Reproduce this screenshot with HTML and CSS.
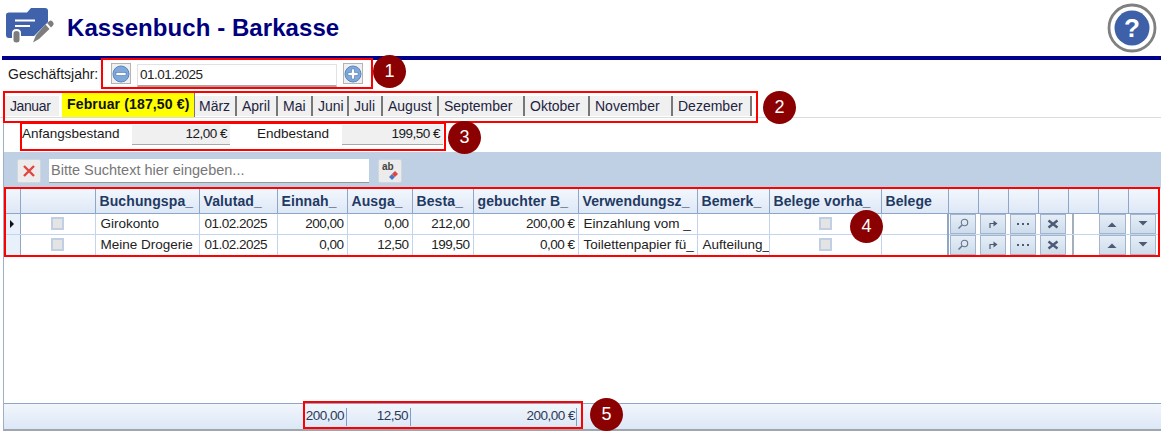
FILE: index.html
```html
<!DOCTYPE html>
<html lang="de">
<head>
<meta charset="utf-8">
<title>Kassenbuch - Barkasse</title>
<link rel="stylesheet" href="styles.css">
</head>
<body>
<div class="page">
  <header class="top">
    <svg class="logo" viewBox="0 0 54 44" width="54" height="44">
      <path fill="#3f62ab" d="M6 15Q6 12.500 9 12.500H27L31 8H45Q48 8 48 11V22L34 36H21V33Q21 29 16.500 29T12 33V38H9Q6 38 6 35Z"/>
      <path fill="#fff" d="M15 19.500H35V21.500H15ZM15 25H30V27H15Z"/>
      <path fill="#7d7d7d" d="M13.500 33.500Q13.500 31 16.500 31T19.500 33.500V40Q19.500 42.500 16.500 42.500T13.500 40Z"/>
      <path fill="#7d7d7d" d="M47 23L49.500 21Q51 20 52.500 21.500L53.500 23Q54 24 53 25.500L51 27.500ZM45.500 24.500L49.500 29L39 39L33 42.500L36 35Z"/>
    </svg>
    <h1 class="title">Kassenbuch - Barkasse</h1>
    <svg class="help" viewBox="0 0 50 50" width="50" height="50">
      <circle cx="25" cy="25" r="23" fill="#fff" stroke="#808080" stroke-width="2.800"/>
      <circle cx="25" cy="25" r="17.500" fill="#3d60a8"/>
      <text x="25" y="34" text-anchor="middle" class="help-mark">?</text>
    </svg>
  </header>
  <div class="rule"></div>

  <div class="year-row">
    <span class="year-label">Geschäftsjahr:</span>
    <button class="round-btn"><svg viewBox="0 0 18 18" width="18" height="18"><circle cx="9" cy="9" r="8" fill="#7fa8da" stroke="#5d86bd"/><rect x="4" y="7.500" width="10" height="3" fill="#fff" stroke="#4c76ad" stroke-width=".6"/></svg></button>
    <div class="date-field digits">01.01.2025</div>
    <button class="round-btn"><svg viewBox="0 0 18 18" width="18" height="18"><circle cx="9" cy="9" r="8" fill="#7fa8da" stroke="#5d86bd"/><path d="M7.500 4h3v3.500H14v3h-3.500V14h-3v-3.500H4v-3h3.500z" fill="#fff" stroke="#4c76ad" stroke-width=".6"/></svg></button>
  </div>

  <nav class="tabs">
    <a class="tab t-jan">Januar</a>
    <a class="tab t-feb active">Februar (187,50 €)</a>
    <a class="tab t-mar">März</a>
    <a class="tab t-apr">April</a>
    <a class="tab t-mai">Mai</a>
    <a class="tab t-jun">Juni</a>
    <a class="tab t-jul">Juli</a>
    <a class="tab t-aug">August</a>
    <a class="tab t-sep">September</a>
    <a class="tab t-okt">Oktober</a>
    <a class="tab t-nov">November</a>
    <a class="tab t-dez">Dezember</a>
  </nav>

  <main class="panel">
    <div class="totals">
      <span class="tot-label tl1">Anfangsbestand</span>
      <span class="tot-value digits">12,00 €</span>
      <span class="tot-label tl2">Endbestand</span>
      <span class="tot-value digits">199,50 €</span>
    </div>
    <div class="search">
      <button class="tool-btn"><svg viewBox="0 0 14 14" width="14" height="14"><path d="M2 2L12 12M12 2L2 12" stroke="#e2453f" stroke-width="2.400"/></svg></button>
      <div class="search-field">Bitte Suchtext hier eingeben...</div>
      <button class="tool-btn ab"><span class="ab-text">ab</span><svg class="ab-icon" viewBox="0 0 12 10" width="12" height="10"><path d="M1 7L4 4L7 7L4 10Z" fill="#4a78c8"/><path d="M4 4L7 1L10 4L7 7Z" fill="#e2453f"/></svg></button>
    </div>
    <div class="grid-area">
      <table class="grid">
        <colgroup>
          <col class="c-ind"><col class="c-chk"><col class="c-bp"><col class="c-val"><col class="c-ein"><col class="c-aus"><col class="c-bes"><col class="c-geb"><col class="c-ver"><col class="c-bem"><col class="c-bv"><col class="c-bel">
          <col class="c-btn"><col class="c-btn"><col class="c-btn"><col class="c-btn"><col class="c-btn"><col class="c-btn"><col class="c-btn">
        </colgroup>
        <thead>
          <tr>
            <th></th><th></th><th>Buchungspa_</th><th>Valutad_</th><th>Einnah_</th><th>Ausga_</th><th>Besta_</th><th>gebuchter B_</th><th>Verwendungsz_</th><th>Bemerk_</th><th>Belege vorha_</th><th>Belege</th>
            <th></th><th></th><th></th><th></th><th></th><th></th><th></th>
          </tr>
        </thead>
        <tbody>
          <tr>
            <td class="ind"><span class="arrow"></span></td><td class="mid"><span class="check"></span></td><td>Girokonto</td><td class="digits">01.02.2025</td><td class="num digits">200,00</td><td class="num digits">0,00</td><td class="num digits">212,00</td><td class="num digits">200,00 €</td><td>Einzahlung vom _</td><td></td><td class="mid"><span class="check"></span></td><td class="sep"></td>
            <td class="bc"><span class="gb"><svg viewBox="0 0 12 12" width="12" height="12"><circle cx="7.500" cy="4.500" r="3.200" fill="none" stroke="#66758f" stroke-width="1.100"/><path d="M5 7L1.500 10.500" stroke="#66758f" stroke-width="1.500"/></svg></span></td>
            <td class="bc"><span class="gb"><svg viewBox="0 0 12 12" width="12" height="12"><path d="M3 10V5.500H7" fill="none" stroke="#4c5a76" stroke-width="1.200"/><path d="M6.500 2.500L10.500 5.500L6.500 8.500Z" fill="#4c5a76"/></svg></span></td>
            <td class="bc focus"><span class="gb dots"><i></i><i></i><i></i></span></td>
            <td class="bc"><span class="gb"><svg viewBox="0 0 12 12" width="12" height="12"><path d="M1.500 2.500L10.500 9.500M10.500 2.500L1.500 9.500" stroke="#4c5a76" stroke-width="2.400"/></svg></span></td>
            <td class="blank"></td>
            <td class="bc"><span class="gb"><svg viewBox="0 0 12 12" width="12" height="12"><path d="M1.500 9L6 4.500L10.500 9Z" fill="#4c5a76"/></svg></span></td>
            <td class="bc"><span class="gb"><svg viewBox="0 0 12 12" width="12" height="12"><path d="M1.500 3L6 7.500L10.500 3Z" fill="#4c5a76"/></svg></span></td>
          </tr>
          <tr>
            <td class="ind"></td><td class="mid"><span class="check"></span></td><td>Meine Drogerie</td><td class="digits">01.02.2025</td><td class="num digits">0,00</td><td class="num digits">12,50</td><td class="num digits">199,50</td><td class="num digits">0,00 €</td><td>Toilettenpapier fü_</td><td>Aufteilung_</td><td class="mid"><span class="check"></span></td><td class="sep"></td>
            <td class="bc"><span class="gb"><svg viewBox="0 0 12 12" width="12" height="12"><circle cx="7.500" cy="4.500" r="3.200" fill="none" stroke="#66758f" stroke-width="1.100"/><path d="M5 7L1.500 10.500" stroke="#66758f" stroke-width="1.500"/></svg></span></td>
            <td class="bc"><span class="gb"><svg viewBox="0 0 12 12" width="12" height="12"><path d="M3 10V5.500H7" fill="none" stroke="#4c5a76" stroke-width="1.200"/><path d="M6.500 2.500L10.500 5.500L6.500 8.500Z" fill="#4c5a76"/></svg></span></td>
            <td class="bc"><span class="gb dots"><i></i><i></i><i></i></span></td>
            <td class="bc"><span class="gb"><svg viewBox="0 0 12 12" width="12" height="12"><path d="M1.500 2.500L10.500 9.500M10.500 2.500L1.500 9.500" stroke="#4c5a76" stroke-width="2.400"/></svg></span></td>
            <td class="blank"></td>
            <td class="bc"><span class="gb"><svg viewBox="0 0 12 12" width="12" height="12"><path d="M1.500 9L6 4.500L10.500 9Z" fill="#4c5a76"/></svg></span></td>
            <td class="bc"><span class="gb"><svg viewBox="0 0 12 12" width="12" height="12"><path d="M1.500 3L6 7.500L10.500 3Z" fill="#4c5a76"/></svg></span></td>
          </tr>
        </tbody>
      </table>
    </div>
    <footer class="summary">
      <span class="sum s-ein digits">200,00</span>
      <span class="sum s-aus digits">12,50</span>
      <span class="sum s-geb digits">200,00 €</span>
    </footer>
  </main>

  <div class="mark m1"></div>
  <div class="mark m2"></div>
  <div class="mark m3"></div>
  <div class="mark m4"></div>
  <div class="mark m5"></div>
  <div class="badge b1">1</div>
  <div class="badge b2">2</div>
  <div class="badge b3">3</div>
  <div class="badge b4">4</div>
  <div class="badge b5">5</div>
</div>
</body>
</html>
```
FILE: styles.css
```css
* { box-sizing: border-box; }
html, body { margin: 0; padding: 0; background: #fff; }
body { font: 14px/16px "Liberation Sans", Arial, sans-serif; color: #1a1a1a; overflow: hidden; }
.page { position: relative; width: 1161px; height: 431px; overflow: hidden; }
.digits { font-size: 13.500px; letter-spacing: -.5px; }

.top { height: 56px; display: flex; align-items: center; padding: 0 4px 0 0; }
.logo { flex: none; align-self: flex-start; }
.title { margin: 0 0 0 13px; font: bold 24px/28px "Liberation Sans", sans-serif; color: #00007f; letter-spacing: .07px; flex: 1; }
.help { flex: none; }
.help-mark { font: bold 26px "Liberation Sans", sans-serif; fill: #fff; }
.rule { height: 4px; margin-left: 2px; background: #00008b; }

.year-row { height: 30px; display: flex; align-items: flex-start; padding: 3px 0 0 8px; }
.year-label { width: 103px; padding-top: 3px; }
.round-btn { width: 20px; height: 21px; padding: 0; margin: 0; background: #f0f0f0; border: 1px solid #b4b4b4; display: flex; align-items: center; justify-content: center; }
.date-field { width: 200px; height: 23px; margin: 1px 6px 0 6px; padding: 2px 2px; background: #fff; border: 1px solid #e2e2e2; border-bottom: 2px solid #a8a8a8; color: #222; }

.tabs { height: 28px; margin-bottom: 2px; display: flex; padding: 3px 0 0 5px; border-bottom: 1px solid #dcdcdc; }
.tab { height: 20px; margin-top: 3px; padding: 2px 0 0 5px; background: #f0f0f0; border-right: 2px solid #777; color: #1e2440; white-space: nowrap; }
.tab.t-jan { width: 54px; border-right: 0; margin-right: 3px; padding-left: 5px; letter-spacing: -.4px; }
.tab.active { background: #ffff00; font-weight: bold; padding: 3px 0 0 5px; height: 24px; margin-top: 0; color: #111; letter-spacing: .15px; border-right: 1px solid #777; }
.t-feb { width: 133px; }
.t-mar { width: 42px; padding-left: 4px; }
.t-apr { width: 41px; }
.t-mai { width: 35px; }
.t-jun { width: 36px; }
.t-jul { width: 34px; }
.t-aug { width: 56px; }
.t-sep { width: 86px; }
.t-okt { width: 65px; }
.t-nov { width: 83px; }
.t-dez { width: 79px; }

.panel { height: 311px; border-left: 1px solid #9fb0c6; margin-left: 3px; border-bottom: 2px solid #a0a6ad; }
.totals { height: 32px; display: flex; align-items: flex-start; padding: 5px 0 0 18px; }
.tot-label { padding-top: 1px; font-size: 13.500px; }
.tot-label.tl1 { width: 110px; }
.tot-label.tl2 { width: 85px; margin-left: 27px; }
.tot-value { background: #f0f0f0; text-align: right; padding: 1px 3px 0 0; height: 20px; border-bottom: 1px solid #aaa; width: 98px; }
.tot-value:last-child { width: 101px; }

.search { height: 37px; background: #bfcfe4; display: flex; align-items: flex-start; padding: 7px 0 0 13px; }
.tool-btn { position: relative; width: 24px; height: 24px; padding: 0; background: #ececec; border: 1px solid #d2d6dd; border-radius: 2px; display: flex; align-items: center; justify-content: center; }
.search-field { width: 320px; height: 24px; margin: 0 9px 0 8px; padding: 3px 2px; background: #fff; border-bottom: 1px solid #999; color: #777; font-size: 14.500px; }
.ab-text { position: absolute; left: 3px; top: 1px; font: bold 10px/12px "Liberation Sans", sans-serif; color: #444; }
.ab-icon { position: absolute; right: 1px; bottom: 2px; }

.grid-area { height: 214px; background: #fff; }
.grid { width: 1154px; border-collapse: collapse; table-layout: fixed; font-size: 13.500px; }
.c-ind { width: 16px; } .c-chk { width: 75px; } .c-bp { width: 104px; } .c-val { width: 78px; } .c-ein { width: 70px; } .c-aus { width: 65px; }
.c-bes { width: 61px; } .c-geb { width: 105px; } .c-ver { width: 119px; } .c-bem { width: 72px; } .c-bv { width: 112px; } .c-bel { width: 67px; } .c-btn { width: 30px; }
.grid th { height: 24px; padding: 0 0 0 4px; text-align: left; font-size: 14px; font-weight: bold; letter-spacing: .1px; color: #1f3a63; white-space: nowrap; overflow: hidden; background: linear-gradient(#f3f7fd, #dde7f5); border-right: 1px solid #8ea6c8; border-bottom: 1px solid #8ea6c8; }
.grid td { height: 21px; padding: 0 3px 0 5px; white-space: nowrap; overflow: hidden; color: #222; border-right: 1px solid #c3d5ee; border-bottom: 1px solid #c3d5ee; }
.grid td.num { text-align: right; }
.grid td.mid { text-align: center; padding: 0; }
.grid td.ind { background: #e8f0fa; padding: 0 0 0 6px; border-right-color: #8ea6c8; }
.grid td.sep { border-right: 2px solid #8ea6c8; }
.grid td.bc { padding: 0 2px 0 1px; background: #fff; border-right-color: #fff; }
.grid td.focus { border-left: 1px dotted #111; padding-left: 1px; }
.grid td.blank { padding: 0; border-right: 0; background: linear-gradient(#a4afbd, #a4afbd) no-repeat 3px 0 / 2px 100%; }
.arrow { display: block; width: 0; height: 0; border-left: 4px solid #111; border-top: 4px solid transparent; border-bottom: 4px solid transparent; }
.check { display: block; width: 13px; height: 13px; margin: 0 auto; background: #e4e4e4; border: 2px solid #c0cfe4; }
.gb { display: flex; height: 20px; align-items: center; justify-content: center; background: linear-gradient(#e6eef7, #cddceb); border: 1px solid #a3b5cc; }
.dots { gap: 3px; }
.dots i { display: block; width: 2px; height: 2px; background: #4c5a76; }

.summary { height: 26px; background: linear-gradient(#f2f6fc, #dce7f6); border-top: 1px solid #8ea6c8; display: flex; color: #2a3a55; padding-top: 4px; }
.sum { height: 18px; text-align: right; border-right: 1px solid #7f9cc4; padding-right: 2px; }
.s-ein { margin-left: 298px; width: 45px; }
.s-aus { width: 64px; }
.s-geb { width: 166px; padding-right: 1px; }

.mark { position: absolute; border: 2px solid #f00; pointer-events: none; }
.m1 { left: 101px; top: 58px; width: 272px; height: 31px; }
.m2 { left: 3px; top: 91px; width: 755px; height: 32px; }
.m3 { left: 20px; top: 122px; width: 426px; height: 29px; }
.m4 { left: 4px; top: 187px; width: 1156px; height: 70px; }
.m5 { left: 303px; top: 401px; width: 280px; height: 28px; }

.badge { position: absolute; width: 33px; height: 33px; border-radius: 50%; background: #8b0000; color: #fff; text-align: center; font: 18px/33px "Liberation Sans", sans-serif; }
.b1 { left: 373px; top: 55px; }
.b2 { left: 763px; top: 91px; }
.b3 { left: 448px; top: 121px; }
.b4 { left: 850px; top: 210px; }
.b5 { left: 590px; top: 398px; }
```
